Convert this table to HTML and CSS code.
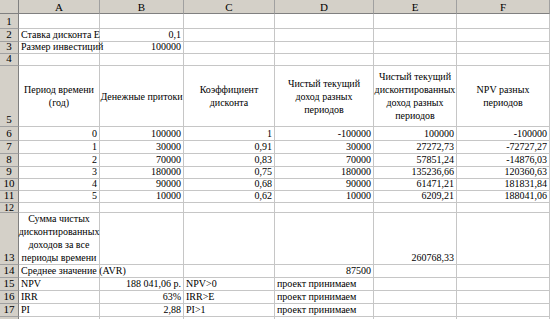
FILE: index.html
```html
<!DOCTYPE html>
<html>
<head>
<meta charset="utf-8">
<link rel="stylesheet" href="styles.css">
</head>
<body>
<div class="sheet">
  <div class="hd corner"></div>
  <div class="hd ch">A</div><div class="hd ch">B</div><div class="hd ch">C</div><div class="hd ch">D</div><div class="hd ch">E</div><div class="hd ch">F</div>

  <div class="hd rh">1</div><div class="c"></div><div class="c"></div><div class="c"></div><div class="c"></div><div class="c"></div><div class="c"></div>

  <div class="hd rh">2</div><div class="c l">Ставка дисконта Е</div><div class="c r">0,1</div><div class="c"></div><div class="c"></div><div class="c"></div><div class="c"></div>

  <div class="hd rh">3</div><div class="c l">Размер инвестиций</div><div class="c r">100000</div><div class="c"></div><div class="c"></div><div class="c"></div><div class="c"></div>

  <div class="hd rh">4</div><div class="c"></div><div class="c"></div><div class="c"></div><div class="c"></div><div class="c"></div><div class="c"></div>

  <div class="hd rh">5</div>
  <div class="c w">Период времени<br>(год)</div>
  <div class="c w">Денежные притоки</div>
  <div class="c w">Коэффициент<br>дисконта</div>
  <div class="c w">Чистый текущий<br>доход разных<br>периодов</div>
  <div class="c w">Чистый текущий<br>дисконтированных<br>доход разных<br>периодов</div>
  <div class="c w">NPV разных<br>периодов</div>

  <div class="hd rh">6</div><div class="c r">0</div><div class="c r">100000</div><div class="c r">1</div><div class="c r">-100000</div><div class="c r">100000</div><div class="c r">-100000</div>
  <div class="hd rh">7</div><div class="c r">1</div><div class="c r">30000</div><div class="c r">0,91</div><div class="c r">30000</div><div class="c r">27272,73</div><div class="c r">-72727,27</div>
  <div class="hd rh">8</div><div class="c r">2</div><div class="c r">70000</div><div class="c r">0,83</div><div class="c r">70000</div><div class="c r">57851,24</div><div class="c r">-14876,03</div>
  <div class="hd rh">9</div><div class="c r">3</div><div class="c r">180000</div><div class="c r">0,75</div><div class="c r">180000</div><div class="c r">135236,66</div><div class="c r">120360,63</div>
  <div class="hd rh">10</div><div class="c r">4</div><div class="c r">90000</div><div class="c r">0,68</div><div class="c r">90000</div><div class="c r">61471,21</div><div class="c r">181831,84</div>
  <div class="hd rh">11</div><div class="c r">5</div><div class="c r">10000</div><div class="c r">0,62</div><div class="c r">10000</div><div class="c r">6209,21</div><div class="c r">188041,06</div>

  <div class="hd rh short">12</div><div class="c"></div><div class="c"></div><div class="c"></div><div class="c"></div><div class="c"></div><div class="c"></div>

  <div class="hd rh">13</div>
  <div class="c w bt">Сумма чистых<br>дисконтированных<br>доходов за все<br>периоды времени</div>
  <div class="c"></div><div class="c"></div><div class="c"></div><div class="c r">260768,33</div><div class="c"></div>

  <div class="hd rh">14</div><div class="c l ov">Среднее значение (AVR)</div><div class="c"></div><div class="c"></div><div class="c r">87500</div><div class="c"></div><div class="c"></div>
  <div class="hd rh">15</div><div class="c l">NPV</div><div class="c r">188&nbsp;041,06 р.</div><div class="c l">NPV&gt;0</div><div class="c l">проект принимаем</div><div class="c"></div><div class="c"></div>
  <div class="hd rh">16</div><div class="c l">IRR</div><div class="c r">63%</div><div class="c l">IRR&gt;E</div><div class="c l">проект принимаем</div><div class="c"></div><div class="c"></div>
  <div class="hd rh">17</div><div class="c l">PI</div><div class="c r">2,88</div><div class="c l">PI&gt;1</div><div class="c l">проект принимаем</div><div class="c"></div><div class="c"></div>
  <div class="hd rh"></div><div class="c"></div><div class="c"></div><div class="c"></div><div class="c"></div><div class="c"></div><div class="c"></div>
</div>
</body>
</html>
```

FILE: styles.css
```css
html, body {
  margin: 0;
  padding: 0;
  background: #ffffff;
  overflow: hidden;
}

.sheet {
  display: grid;
  grid-template-columns: 19px 81px 84px 91px 99px 83px 93px;
  grid-template-rows: 14px 15px 13px 12px 12px 61px 14px 13px 13px 12px 12px 12px 10px 52px 13px 13px 13px 13px 13px;
  width: 550px;
  height: 319px;
  overflow: hidden;
  font-family: "Liberation Serif", "DejaVu Serif", serif;
  font-size: 10px;
  color: #000;
}

.c, .hd {
  box-sizing: border-box;
  border-right: 1px solid #c6c6c6;
  border-bottom: 1px solid #c6c6c6;
  display: flex;
  align-items: flex-end;
  line-height: 12px;
  white-space: nowrap;
  min-width: 0;
}

.hd {
  background: #d4d0c8;
  border-right-color: #a0a0a0;
  border-bottom-color: #a0a0a0;
  justify-content: center;
  font-size: 11px;
}

.ch {
  align-items: center;
  border-bottom-color: #808080;
}

.corner {
  border-bottom-color: #808080;
  border-right-color: #808080;
}

.rh {
  border-right-color: #808080;
  line-height: 13px;
}

.short {
  align-items: center;
  line-height: 10px;
  font-size: 10px;
}

.l {
  justify-content: flex-start;
  padding-left: 2px;
}

.r {
  justify-content: flex-end;
  padding-right: 2px;
}

.w {
  flex-direction: column;
  justify-content: center;
  align-items: center;
  text-align: center;
  line-height: 13px;
  overflow: visible;
}

.bt {
  justify-content: flex-end;
}

.ov {
  overflow: visible;
  position: relative;
  z-index: 1;
}
```
